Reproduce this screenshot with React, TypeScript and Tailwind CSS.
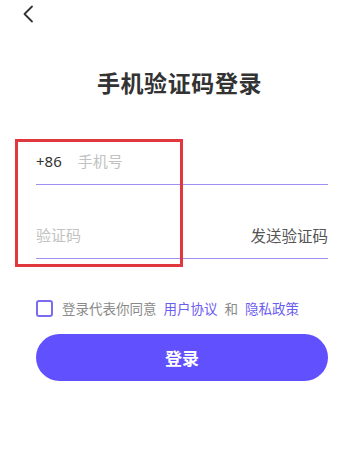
import { useState } from "react"

const font = { fontFamily: '"Noto Sans CJK SC", "Noto Sans", sans-serif' }

export default function App() {
  const [agree, setAgree] = useState(false)

  return (
    <div className="relative w-[359px] h-[461px] bg-white text-[#333]" style={font}>
      {/* back */}
      <div className="pl-[22px] pt-[5px] h-[24px]">
        <svg width="12" height="18" viewBox="0 0 12 18" fill="none">
          <path d="M10 1.5L2.5 9L10 16.5" stroke="#333" strokeWidth="1.8" strokeLinecap="round" strokeLinejoin="round" />
        </svg>
      </div>

      <h1 className="mt-[42px] text-center text-[23px] font-semibold tracking-[0.6px] text-[#333] leading-[32px]">
        手机验证码登录
      </h1>

      <div className="pl-9 pr-[31px] mt-[43px]">
        {/* phone */}
        <div className="flex items-center h-[44px] border-b border-[#9d90f2] text-[15px]">
          <span className="text-[#333] pb-[2px]" style={{ fontFamily: '"Noto Sans", sans-serif' }}>+86</span>
          <span className="ml-4 text-[#c2c2c2] pb-[2px]">手机号</span>
        </div>

        {/* code */}
        <div className="flex items-center justify-between h-[44px] mt-[30px] border-b border-[#9d90f2] text-[15px]">
          <span className="text-[#c2c2c2] pb-[2px]">验证码</span>
          <span className="text-[#555] text-[15.5px] pb-[2px]">发送验证码</span>
        </div>

        {/* agreement */}
        <div className="flex items-center mt-[39px] text-[13.5px]">
          <button
            onClick={() => setAgree(!agree)}
            className="w-[17px] h-[17px] border-2 border-[#7a6cf0] rounded-[3px]"
          />
          <span className="ml-[9px] text-[#8a8a8a]">登录代表你同意</span>
          <span className="ml-[7px] text-[#6b5cf0]">用户协议</span>
          <span className="ml-[7px] text-[#8a8a8a]">和</span>
          <span className="ml-[7px] text-[#6b5cf0]">隐私政策</span>
        </div>

        {/* submit */}
        <button className="mt-[16px] w-full h-[47px] rounded-full bg-[#6150fd] text-white text-[17px] font-semibold">
          登录
        </button>
      </div>

      {/* annotation box */}
      <div className="absolute left-[15px] top-[139px] w-[168px] h-[128px] border-[3px] border-[#e0383e]" />
    </div>
  )
}
